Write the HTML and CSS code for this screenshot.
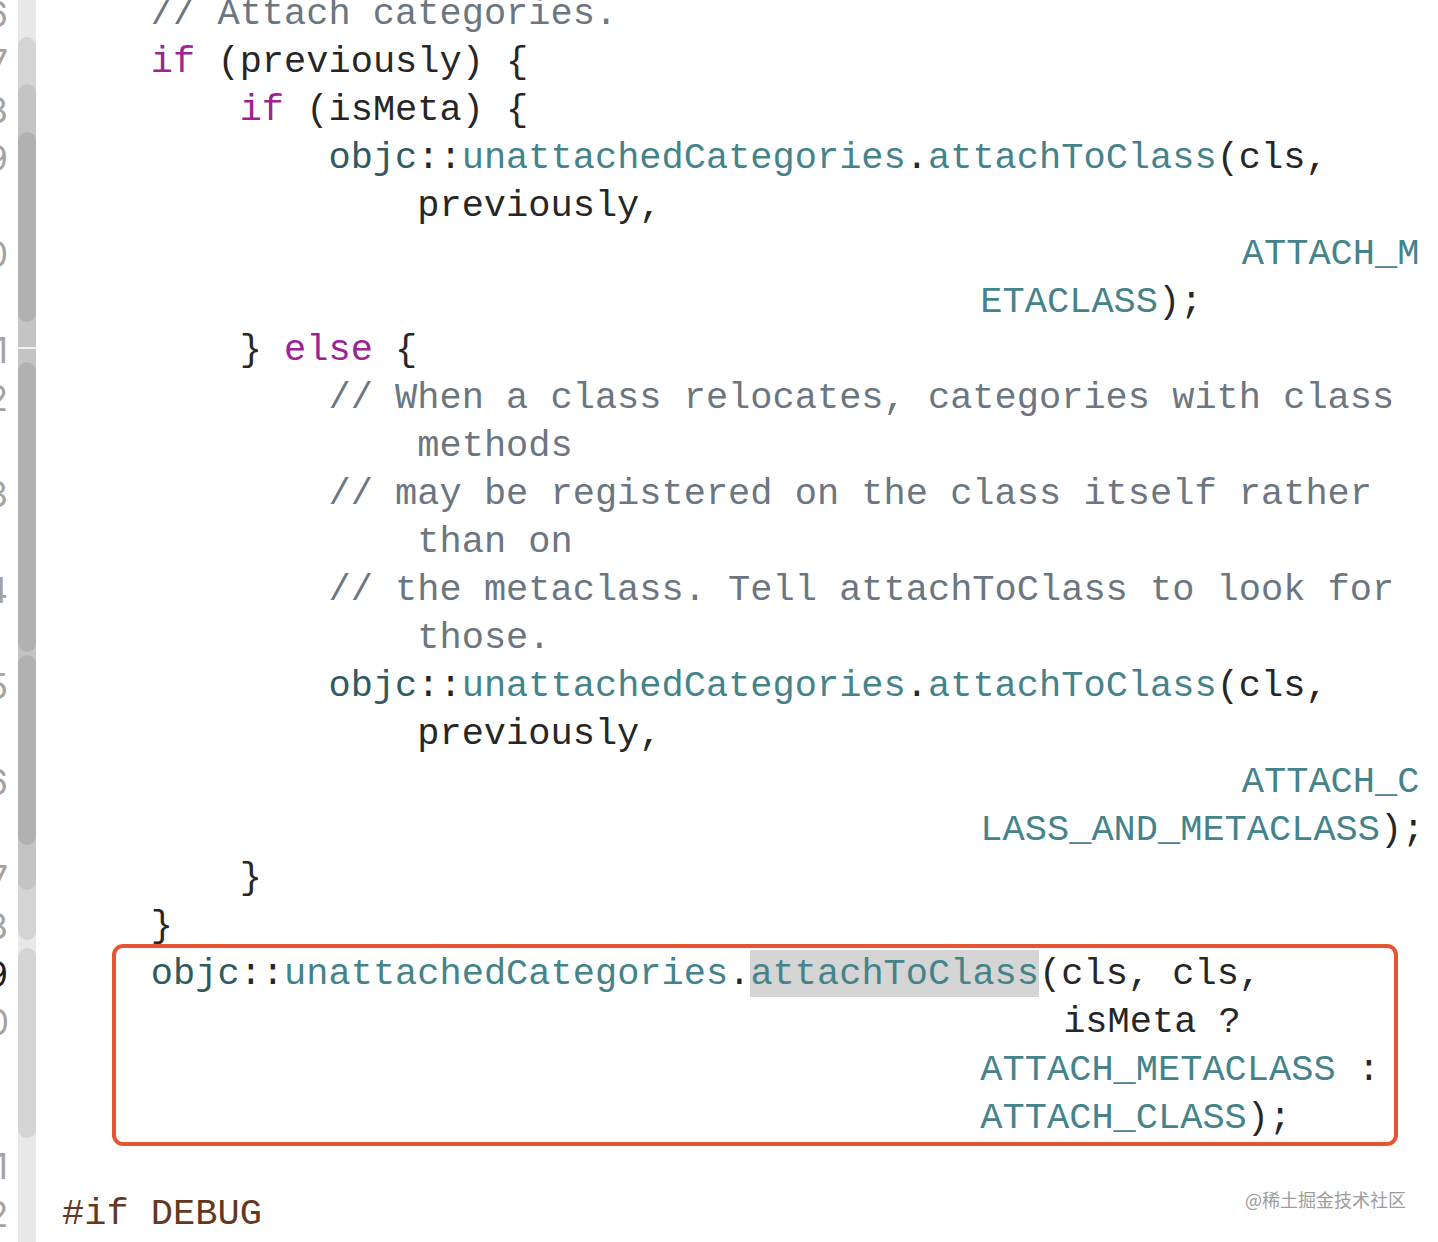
FILE: index.html
```html
<!DOCTYPE html>
<html>
<head>
<meta charset="utf-8">
<link rel="stylesheet" href="styles.css">
</head>
<body>
<div class="editor">
  <div class="nums">
    <div class="n">1386</div>
    <div class="n">1387</div>
    <div class="n">1388</div>
    <div class="n">1389</div>
    <div class="n"></div>
    <div class="n">1390</div>
    <div class="n"></div>
    <div class="n">1391</div>
    <div class="n">1392</div>
    <div class="n"></div>
    <div class="n">1393</div>
    <div class="n"></div>
    <div class="n">1394</div>
    <div class="n"></div>
    <div class="n">1395</div>
    <div class="n"></div>
    <div class="n">1396</div>
    <div class="n"></div>
    <div class="n">1397</div>
    <div class="n">1398</div>
    <div class="n cur">1399</div>
    <div class="n">1400</div>
    <div class="n"></div>
    <div class="n"></div>
    <div class="n">1401</div>
    <div class="n">1402</div>
  </div>
  <div class="rib">
    <div class="sg s1"></div>
    <div class="sg s2"><i></i></div>
    <div class="sg s3"><i></i></div>
    <div class="sg s4"><i></i></div>
    <div class="sg s5"></div>
    <div class="sg s6"></div>
    <div class="sg s7"></div>
    <div class="sg s8"><i></i></div>
    <div class="sg s9"></div>
    <div class="sg s10"><i></i></div>
    <div class="sg s11"><i></i></div>
    <div class="sg s12"><i></i></div>
    <div class="sg s13"></div>
    <div class="sg s14"><i></i></div>
  </div>
  <div class="code">
<div class="row">    <span class="c">// Attach categories.</span></div>
<div class="row">    <span class="k">if</span> (previously) {</div>
<div class="row">        <span class="k">if</span> (isMeta) {</div>
<div class="row">            <span class="ns">objc</span>::<span class="f">unattachedCategories</span>.<span class="f">attachToClass</span>(cls,</div>
<div class="row">                previously,</div>
<div class="row wa">                                                     <span class="f">ATTACH_M</span></div>
<div class="row wb">                                         <span class="f">ETACLASS</span>);</div>
<div class="row">        } <span class="k">else</span> {</div>
<div class="row">            <span class="c">// When a class relocates, categories with class</span></div>
<div class="row">                <span class="c">methods</span></div>
<div class="row">            <span class="c">// may be registered on the class itself rather</span></div>
<div class="row">                <span class="c">than on</span></div>
<div class="row">            <span class="c">// the metaclass. Tell attachToClass to look for</span></div>
<div class="row">                <span class="c">those.</span></div>
<div class="row">            <span class="ns">objc</span>::<span class="f">unattachedCategories</span>.<span class="f">attachToClass</span>(cls,</div>
<div class="row">                previously,</div>
<div class="row wa">                                                     <span class="f">ATTACH_C</span></div>
<div class="row wb">                                         <span class="f">LASS_AND_METACLASS</span>);</div>
<div class="row">        }</div>
<div class="row">    }</div>
<div class="row">    <span class="ns">objc</span>::<span class="f">unattachedCategories</span>.<span class="f hl">attachToClass</span>(cls, cls,</div>
<div class="row wc">                                             isMeta ?</div>
<div class="row wb">                                         <span class="f">ATTACH_METACLASS</span> :</div>
<div class="row wb">                                         <span class="f">ATTACH_CLASS</span>);</div>
<div class="row"> </div>
<div class="row"><span class="pp">#if DEBUG</span></div>
  </div>
</div>
<div class="mark"></div>
<div class="wm">@稀土掘金技术社区</div>
</body>
</html>
```
FILE: styles.css
```css
html, body {
  margin: 0;
  padding: 0;
  background: #ffffff;
}
body {
  width: 1438px;
  height: 1242px;
  overflow: hidden;
  position: relative;
}
.editor {
  display: flex;
  align-items: flex-start;
  height: 1242px;
}
.nums {
  width: 80px;
  margin-left: -72px;
  margin-top: -10px;
  flex: none;
  font-family: "Inter", "Roboto", sans-serif;
  font-size: 35px;
  color: #a3a3a3;
  text-align: right;
}
.n {
  height: 48px;
  line-height: 49px;
}
.n.cur {
  color: #1c1c1c;
}
.rib {
  flex: none;
  width: 18px;
  height: 1242px;
  margin-left: 10px;
  background: #e8e8e8;
  display: flex;
  flex-direction: column;
}
.sg {
  flex: none;
  display: flex;
}
.sg > i {
  display: block;
  flex: 1;
}
.s1 { height: 37px; }
.s2 { height: 47px; background: #e8e8e8; }
.s2 > i { background: #d4d4d4; border-radius: 9px 9px 0 0; }
.s3 { height: 48px; background: #d4d4d4; }
.s3 > i { background: #c4c4c4; border-radius: 9px 9px 0 0; }
.s4 { height: 190px; background: #c4c4c4; }
.s4 > i { background: #b1b1b1; border-radius: 9px; }
.s5 { height: 25px; background: #c4c4c4; }
.s6 { height: 2px; background: #f2f2f2; }
.s7 { height: 13px; background: #c4c4c4; }
.s8 { height: 290px; background: #c4c4c4; }
.s8 > i { background: #b1b1b1; border-radius: 9px; }
.s9 { height: 3px; background: #c4c4c4; }
.s10 { height: 190px; background: #c4c4c4; }
.s10 > i { background: #b1b1b1; border-radius: 9px; }
.s11 { height: 45px; background: #d4d4d4; }
.s11 > i { background: #c4c4c4; border-radius: 0 0 9px 9px; }
.s12 { height: 50px; background: #e8e8e8; }
.s12 > i { background: #d4d4d4; border-radius: 0 0 9px 9px; }
.s13 { height: 8px; }
.s14 { height: 190px; background: #e8e8e8; }
.s14 > i { background: #d4d4d4; border-radius: 9px; }
.code {
  flex: 1;
  margin-left: 26px;
  margin-top: -10px;
  font-family: "Liberation Mono", monospace;
  font-size: 37px;
  color: #262626;
}
.row {
  height: 48px;
  line-height: 48px;
  white-space: pre;
}
.wa { padding-left: 3px; }
.wb { padding-left: 8px; }
.wc { padding-left: 2px; }
.c { color: #6c7680; }
.k { color: #9b2393; }
.ns { color: #2f5b60; }
.f { color: #45838a; }
.pp { color: #643820; }
.hl {
  display: inline-block;
  background: #d5d5d5;
  height: 47px;
}
.mark {
  position: absolute;
  left: 112px;
  top: 944px;
  width: 1286px;
  height: 202px;
  box-sizing: border-box;
  border: 4px solid #e5552f;
  border-radius: 11px;
}
.wm {
  position: absolute;
  right: 32px;
  top: 1186px;
  font-family: "Noto Sans CJK SC", sans-serif;
  font-size: 18px;
  color: #9c9c9c;
}
```
